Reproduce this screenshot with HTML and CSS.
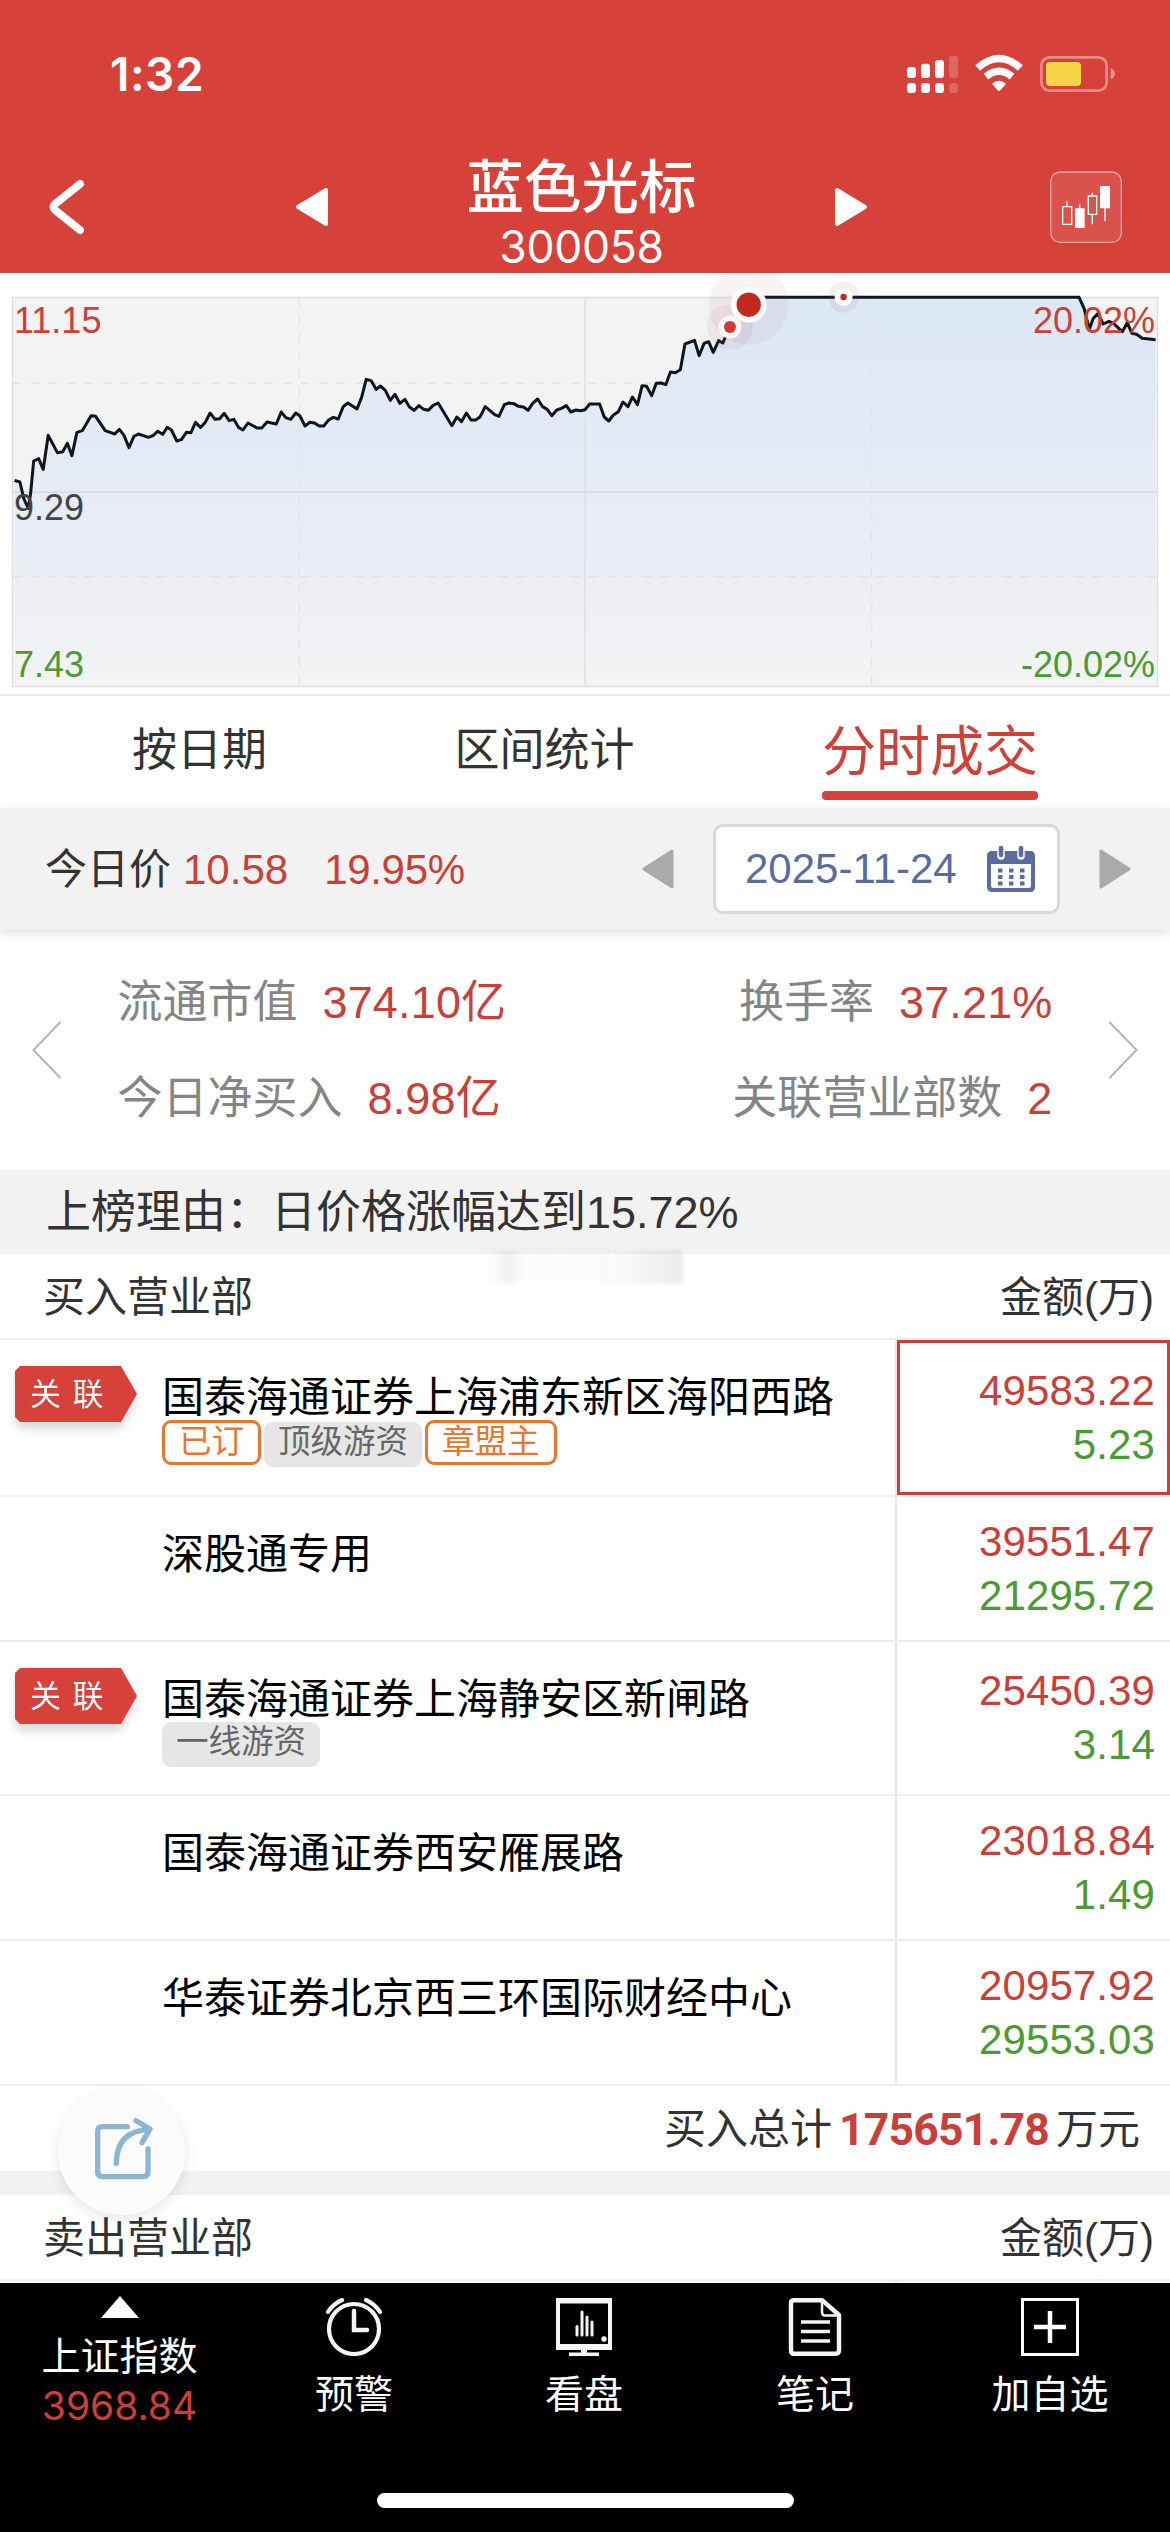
FILE: index.html
```html
<!DOCTYPE html>
<html lang="zh-CN">
<head>
<meta charset="utf-8">
<title>蓝色光标 300058</title>
<link rel="stylesheet" href="styles.css">
</head>
<body>
<header class="header">
  <div class="status">
    <span class="time">1:32</span>
    <svg class="status-icons" viewBox="0 0 720 168">
      <g fill="#fff">
        <rect x="51" y="81" width="27" height="33" rx="9"/><rect x="93" y="71" width="27" height="43" rx="9"/><rect x="135" y="60" width="27" height="54" rx="9"/>
        <rect x="51" y="129" width="27" height="30" rx="10"/><rect x="93" y="129" width="27" height="30" rx="10"/><rect x="135" y="129" width="27" height="30" rx="10"/>
        <rect x="177" y="48" width="27" height="66" rx="9" opacity=".2"/><rect x="177" y="129" width="27" height="30" rx="10" opacity=".2"/>
        <path d="M306 131Q327 113 348 131L331 151Q327 155 323 151Z"/>
      </g>
      <g fill="none" stroke="#fff" stroke-width="22">
        <path d="M263 84Q327 27 391 84"/><path d="M288 110Q327 78 366 110"/>
      </g>
      <rect x="454" y="52" width="196" height="100" rx="25" fill="none" stroke="#fff" stroke-width="8" opacity=".4"/>
      <path d="M662 84Q675 91 675 101T662 118Z" fill="#fff" opacity=".45"/>
      <rect x="468" y="66" width="105" height="72" rx="12" fill="#f7d548"/>
    </svg>
  </div>
  <div class="titlebar">
    <svg class="back" viewBox="0 0 38 56"><path d="M33 5L8 25Q5 28 8 31L33 51" fill="none" stroke="#fff" stroke-width="8" stroke-linecap="round" stroke-linejoin="round"/></svg>
    <div class="switcher">
      <svg width="34" height="40" viewBox="0 0 34 40"><path d="M31 3V37L3 20Z" fill="#fff" stroke="#fff" stroke-width="4" stroke-linejoin="round"/></svg>
      <div class="title"><div class="name">蓝色光标</div><div class="code">300058</div></div>
      <svg width="34" height="40" viewBox="0 0 34 40"><path d="M3 3V37L31 20Z" fill="#fff" stroke="#fff" stroke-width="4" stroke-linejoin="round"/></svg>
    </div>
    <svg class="kline" viewBox="480 392 216 216">
      <rect x="482" y="395" width="212" height="211" rx="28" fill="#fff" fill-opacity=".09" stroke="#fff" stroke-opacity=".5" stroke-width="4"/>
      <g fill="none" stroke="#fff" stroke-width="4">
        <path d="M531 483V497M518 499H545V552H518ZM569 492V506M607 457V466M595 467H620V522H595ZM607 523V552M645 502V543"/>
      </g>
      <path d="M555 504H584V563H555ZM630 437H660V504H630Z" fill="#fff"/>
    </svg>
  </div>
</header>

<section class="chart">
  <svg width="1170" height="421" viewBox="0 0 1170 421">
    <defs>
      <linearGradient id="area" gradientUnits="userSpaceOnUse" x1="0" y1="52" x2="0" y2="1219">
        <stop offset="0" stop-color="#dce8f5"/><stop offset=".5" stop-color="#e6ebf5"/><stop offset="1" stop-color="#f3f3f3"/>
      </linearGradient>
    </defs>
    <rect x="12.5" y="24.5" width="1145" height="389" fill="#f3f3f3"/>
    <g transform="translate(0 7) scale(.38265 .33333)">
      <path fill="url(#area)" d="M38 1219V601L52 606 62 655 74 685 80 640 88 543 101 536 113 568 126 466 150 518 164 515 176 490 188 527 201 457 215 452 238 407 250 409 275 452 300 462 312 448 324 466 337 503 350 469 362 462 388 472 400 467 412 454 425 463 437 442 448 450 462 483 474 479 487 457 499 458 511 427 524 442 536 428 549 399 562 418 574 416 586 400 599 422 611 418 624 443 635 450 648 429 672 444 684 444 698 426 722 432 735 396 747 413 760 418 773 399 784 408 797 438 810 427 822 429 834 438 846 438 858 421 871 412 884 417 897 380 909 369 933 387 945 352 957 298 970 302 983 328 994 318 1007 331 1020 361 1032 343 1045 370 1058 358 1070 381 1082 391 1095 377 1107 388 1119 391 1132 376 1145 369 1181 437 1194 411 1206 425 1219 399 1231 420 1243 420 1255 410 1268 380 1293 404 1304 409 1318 374 1330 369 1343 371 1355 379 1368 381 1380 391 1392 370 1405 357 1418 380 1430 388 1442 407 1455 390 1467 385 1480 377 1492 396 1505 390 1517 392 1529 389 1541 372 1567 372 1579 411 1591 423 1603 405 1616 395 1628 366 1641 380 1653 351 1666 374 1678 317 1690 319 1703 347 1715 310 1728 309 1740 314 1752 276 1765 278 1778 269 1790 192 1815 181 1827 227 1840 190 1852 185 1864 217 1878 182 1889 189 1895 173 1908 141 1957 74 1965 52 2820 52 2833 85 2847 148 2857 115 2870 100 2883 132 2898 124 2910 130 2933 155 2946 128 2958 160 2970 163 2985 175 3020 179V1219Z"/>
    </g>
    <g fill="none" stroke="#dde0e3" stroke-width="1.4">
      <path d="M12.5 24.5H1157.5V413.5H12.5ZM585 24.5V413.5"/><path d="M12.5 219.3H1157.5" stroke="#d5d9e0"/>
      <path d="M12.5 110.3H1157.5M12.5 303.7H1157.5M299.3 24.5V413.5M871.5 24.5V413.5" stroke-dasharray="9 9" stroke="#e1e4e7"/>
    </g>
    <g transform="translate(0 7) scale(.38265 .33333)">
      <path class="line" d="M38 601L52 606 62 655 74 685 80 640 88 543 101 536 113 568 126 466 150 518 164 515 176 490 188 527 201 457 215 452 238 407 250 409 275 452 300 462 312 448 324 466 337 503 350 469 362 462 388 472 400 467 412 454 425 463 437 442 448 450 462 483 474 479 487 457 499 458 511 427 524 442 536 428 549 399 562 418 574 416 586 400 599 422 611 418 624 443 635 450 648 429 672 444 684 444 698 426 722 432 735 396 747 413 760 418 773 399 784 408 797 438 810 427 822 429 834 438 846 438 858 421 871 412 884 417 897 380 909 369 933 387 945 352 957 298 970 302 983 328 994 318 1007 331 1020 361 1032 343 1045 370 1058 358 1070 381 1082 391 1095 377 1107 388 1119 391 1132 376 1145 369 1181 437 1194 411 1206 425 1219 399 1231 420 1243 420 1255 410 1268 380 1293 404 1304 409 1318 374 1330 369 1343 371 1355 379 1368 381 1380 391 1392 370 1405 357 1418 380 1430 388 1442 407 1455 390 1467 385 1480 377 1492 396 1505 390 1517 392 1529 389 1541 372 1567 372 1579 411 1591 423 1603 405 1616 395 1628 366 1641 380 1653 351 1666 374 1678 317 1690 319 1703 347 1715 310 1728 309 1740 314 1752 276 1765 278 1778 269 1790 192 1815 181 1827 227 1840 190 1852 185 1864 217 1878 182 1889 189 1895 173 1908 141 1957 74 1965 52 2820 52 2833 85 2847 148 2857 115 2870 100 2883 132 2898 124 2910 130 2933 155 2946 128 2958 160 2970 163 2985 175 3020 179"/>
    </g>
    <circle cx="730" cy="54" r="23" fill="#a05060" fill-opacity=".08"/>
    <circle cx="730" cy="54" r="11.5" fill="#fff"/><circle cx="730" cy="54" r="6" fill="#cf3a32"/>
    <circle cx="748.7" cy="31.7" r="40" fill="#a05060" fill-opacity=".07"/>
    <circle cx="748.7" cy="31.7" r="18" fill="#fff"/><circle cx="748.7" cy="31.7" r="12.2" fill="#c22a20"/>
    <circle cx="843.6" cy="24" r="15.5" fill="#a05060" fill-opacity=".09"/>
    <circle cx="843.6" cy="24" r="9" fill="#fff"/><circle cx="843.6" cy="24" r="3.2" fill="#c22a20"/>
    <g class="axis">
      <text x="14" y="60" fill="#cc403a">11.15</text>
      <text x="14" y="247" fill="#444">9.29</text>
      <text x="14" y="404" fill="#4b9a33">7.43</text>
      <text x="1155" y="60" text-anchor="end" fill="#cc403a">20.02%</text>
      <text x="1155" y="404" text-anchor="end" fill="#4b9a33">-20.02%</text>
    </g>
  </svg>
</section>

<nav class="tabs"><span>按日期</span><span>区间统计</span><span class="active">分时成交</span></nav>

<section class="price">
  <span class="label">今日价</span><span class="red p1">10.58</span><span class="red p2">19.95%</span>
  <svg class="prev" width="32" height="40" viewBox="0 0 32 40"><path d="M30 2V38L2 20Z" fill="#aaa" stroke="#aaa" stroke-width="3" stroke-linejoin="round"/></svg>
  <div class="date"><span>2025-11-24</span>
    <svg width="48" height="46" viewBox="0 0 48 46">
      <path d="M5 5H43Q48 5 48 10V41Q48 46 43 46H5Q0 46 0 41V10Q0 5 5 5ZM4 18V40Q4 42 6 42H42Q44 42 44 40V18Z" fill="#5b6a9f" fill-rule="evenodd"/>
      <path d="M14 1V10M34 1V10" stroke="#fff" stroke-width="7.500" stroke-linecap="round"/>
      <path d="M14 2V9M34 2V9" stroke="#5b6a9f" stroke-width="4.500" stroke-linecap="round"/>
      <path d="M11 24.500H38M11 31H38M11 37.500H38" stroke="#5b6a9f" stroke-width="4" stroke-dasharray="4.500 6.500"/>
    </svg>
  </div>
  <svg width="32" height="40" viewBox="0 0 32 40"><path d="M2 2V38L30 20Z" fill="#aaa" stroke="#aaa" stroke-width="3" stroke-linejoin="round"/></svg>
</section>

<section class="stats">
  <svg width="30" height="58" viewBox="0 0 30 58"><path d="M28.500 1L1.500 29L28.500 57" fill="none" stroke="#b4b4b4" stroke-width="2"/></svg>
  <div class="grid">
    <div><span>流通市值</span><b>374.10亿</b></div>
    <div class="r"><span>换手率</span><b>37.21%</b></div>
    <div><span>今日净买入</span><b>8.98亿</b></div>
    <div class="r"><span>关联营业部数</span><b>2</b></div>
  </div>
  <svg width="30" height="58" viewBox="0 0 30 58"><path d="M1.500 1L28.500 29L1.500 57" fill="none" stroke="#b4b4b4" stroke-width="2"/></svg>
</section>

<div class="reason">上榜理由：日价格涨幅达到15.72%</div>

<div class="thead">
  <span>买入营业部</span><span>金额(万)</span>
  <i class="smudge"></i>
</div>
<main>
  <div class="row tall">
    <div class="broker"><span class="badge"><em>关 联</em></span><p>国泰海通证券上海浦东新区海阳西路</p>
      <div class="tags"><span class="tag o">已订</span><span class="tag g">顶级游资</span><span class="tag o">章盟主</span></div></div>
    <div class="amount picked"><span class="buy">49583.22</span><span class="sell">5.23</span></div>
  </div>
  <div class="row"><div class="broker"><p>深股通专用</p></div>
    <div class="amount"><span class="buy">39551.47</span><span class="sell">21295.72</span></div></div>
  <div class="row mid">
    <div class="broker"><span class="badge"><em>关 联</em></span><p>国泰海通证券上海静安区新闸路</p>
      <div class="tags solo"><span class="tag g">一线游资</span></div></div>
    <div class="amount"><span class="buy">25450.39</span><span class="sell">3.14</span></div>
  </div>
  <div class="row"><div class="broker"><p>国泰海通证券西安雁展路</p></div>
    <div class="amount"><span class="buy">23018.84</span><span class="sell">1.49</span></div></div>
  <div class="row"><div class="broker"><p>华泰证券北京西三环国际财经中心</p></div>
    <div class="amount"><span class="buy">20957.92</span><span class="sell">29553.03</span></div></div>
</main>
<div class="total"><span>买入总计</span><strong>175651.78</strong><span>万元</span></div>
<div class="band"></div>
<div class="thead sellhead"><span>卖出营业部</span><span>金额(万)</span></div>
<div class="row peek"><div class="broker"></div><div class="amount"></div></div>

<button class="share" aria-label="分享">
  <svg width="60" height="64" viewBox="158 78 180 192"><g fill="none" stroke="#8cb5d3" stroke-width="16" stroke-linecap="round" stroke-linejoin="round">
    <path d="M258 107H183Q169 107 169 121V243Q169 257 183 257H306Q320 257 320 243V174"/>
    <path d="M225 217Q225 120 324 115M284 89L326 114L302 155"/></g></svg>
</button>

<footer class="tabbar">
  <div class="item index"><svg width="38" height="22" viewBox="0 0 38 22"><path d="M19 0L38 22H0Z" fill="#fff"/></svg><span>上证指数</span><span class="val">3968.84</span></div>
  <div class="item"><svg viewBox="0 0 58 58"><g fill="none" stroke="#f4f4f4" stroke-width="4.200" stroke-linecap="round"><circle cx="29" cy="31" r="25"/><path d="M29 13V32H42" stroke-width="4.500"/><path d="M3 14Q8 6 17 2M55 14Q50 6 41 2"/></g></svg><span>预警</span></div>
  <div class="item"><svg viewBox="0 0 58 58"><path d="M1 0H57V52H32V54.500H44V58H14V54.500H26V52H1ZM5 5.500V46H53V5.500Z" fill="#f4f4f4" fill-rule="evenodd"/><g stroke="#f4f4f4" stroke-width="3" stroke-linecap="round"><path d="M22 28.500V37M27 14V37M32 19V37M37 24V37"/></g><circle cx="49" cy="41" r="2.700" fill="#f4f4f4"/></svg><span>看盘</span></div>
  <div class="item"><svg viewBox="0 0 58 58"><g fill="none" stroke="#f4f4f4" stroke-width="4.400" stroke-linejoin="round"><path d="M8 2.200H36L53 17V52Q53 55.800 49 55.800H8Q5 55.800 5 52V5Q5 2.200 8 2.200Z"/><path d="M36 3V14Q36 17.500 39 17.500H52" stroke-width="2.500"/><path d="M15 24H44M15 33.500H44M15 43H44" stroke-width="3.500"/></g></svg><span>笔记</span></div>
  <div class="item"><svg viewBox="0 0 58 58"><path d="M1.500 1.500H56.500V56.500H1.500Z" fill="none" stroke="#fff" stroke-width="3"/><path d="M29 13V45M13 29H45" stroke="#fff" stroke-width="4.500"/></svg><span>加自选</span></div>
  <i class="home"></i>
</footer>
</body>
</html>
```

FILE: styles.css
```css
* { box-sizing: border-box; }
body { margin: 0; width: 1170px; height: 2532px; overflow: hidden; position: relative; background: #fff; color: #333; font: 42px/1.2 "Liberation Sans", "Noto Sans CJK SC", sans-serif; }
svg { display: block; flex: none; }
span { white-space: nowrap; }
.red { color: #c9403a; }

.header { height: 273px; background: #d6413a; color: #fff; }
.status { height: 141px; display: flex; justify-content: space-between; padding: 40px 40px 0 110px; }
.time { font: 600 46px/68px Inter, sans-serif; letter-spacing: .5px; }
.status-icons { width: 240px; height: 56px; }
.titlebar { height: 132px; display: flex; align-items: center; padding: 0 48px 0 47px; }
.back { width: 38px; height: 56px; }
.switcher { width: 574px; margin: 0 182px 0 210px; display: flex; align-items: center; justify-content: space-between; }
.title { text-align: center; margin-top: 11px; }
.name { font-size: 57.500px; font-weight: 500; line-height: 68px; }
.code { font: 400 44.500px/50px Inter, sans-serif; letter-spacing: -.3px; }
.kline { width: 72px; height: 72px; }

.chart { height: 421px; }
.line { fill: none; stroke: #10151c; stroke-width: 3px; stroke-linejoin: round; vector-effect: non-scaling-stroke; }
.axis { font-size: 36px; }

.tabs { height: 114px; display: flex; justify-content: space-between; padding: 0 132px; border-top: 2px solid #ececec; font-size: 45px; line-height: 109px; }
.active { align-self: flex-start; height: 104px; font-size: 54px; line-height: 113px; color: #cf4039; display: flex; flex-direction: column; }
.active::after { content: ""; height: 9px; flex: none; margin-top: -18px; border-radius: 4px; background: #d6413a; }
.price { height: 122px; position: relative; display: flex; align-items: center; padding: 0 39px 0 45px; background: #f2f2f2; box-shadow: 0 3px 9px rgba(0,0,0,.13); }
.price > span { padding-top: 3px; }
.p1 { margin-left: 12px; }
.p2 { margin-left: 36px; letter-spacing: -.3px; }
.prev { margin-left: auto; }
.date { width: 347px; height: 90px; margin: 0 39px; padding: 0 22px 0 29px; display: flex; align-items: center; justify-content: space-between; border: 3px solid #d9d9d9; border-radius: 10px; background: #fff; color: #5b6a9f; }

.stats { height: 240px; display: flex; align-items: center; justify-content: space-between; padding: 0 32px; font-size: 45px; }
.grid { width: 935px; display: grid; grid-template-columns: 1fr 1fr; row-gap: 42px; line-height: 54px; margin-top: 1px; }
.grid div { display: flex; gap: 25px; color: #858585; }
.grid .r { justify-content: flex-end; }
.grid b { font-weight: 400; color: #c9403a; letter-spacing: .15px; }
.reason { height: 84px; line-height: 85px; padding-left: 46px; background: #f2f2f2; font-size: 45px; }

.thead { height: 84px; display: flex; align-items: center; justify-content: space-between; padding: 4px 16px 0 43px; position: relative; }
.sellhead { height: 84px; }
.smudge { position: absolute; left: 485px; top: -4px; width: 198px; height: 34px; background: linear-gradient(90deg, rgba(120,120,120,0) 0, rgba(120,120,120,.1) 12%, rgba(120,120,120,.02) 20%, rgba(120,120,120,.03) 65%, rgba(120,120,120,.14)); filter: blur(2px); }

.row { height: 145px; display: flex; border-top: 2px solid #eee; }
.tall { height: 157px; }
.mid { height: 154px; }
.peek { height: 3px; }
.broker { flex: 1; position: relative; padding: 31px 0 0 162px; border-right: 2px solid #e6e6e6; }
.broker p { margin: 0; height: 50px; line-height: 54px; color: #000; white-space: nowrap; }
.badge { position: absolute; left: 15px; top: 26px; filter: drop-shadow(0 7px 5px rgba(0,0,0,.15)); }
.badge em { display: block; width: 122px; height: 56px; padding-left: 15px; background: #d6413a; clip-path: polygon(0 5px, 5px 0, 106px 0, 122px 28px, 106px 56px, 5px 56px, 0 51px); color: #fff; font-style: normal; font-size: 31px; line-height: 58px; word-spacing: 3px; }
.tags { display: flex; gap: 3px; }
.solo { margin-top: -2px; }
.tag { height: 45px; line-height: 40px; font-size: 32.500px; border-radius: 9px; }
.o { border: 3px solid #e8762f; color: #e8762f; padding: 0 14px; margin-top: -1px; line-height: 39px; }
.g { background: #e6e6e6; color: #666; padding: 0 14px; margin-top: 1px; }
.amount { width: 273px; display: flex; flex-direction: column; align-items: flex-end; justify-content: center; padding-right: 15px; line-height: 54px; }
.amount span { font-size: 42px; letter-spacing: .1px; }
.picked { border: 3px solid #c9403a; padding-right: 12px; }
.buy { color: #c9403a; }
.sell { color: #4b9a33; }

.total { height: 87px; display: flex; align-items: center; justify-content: flex-end; padding: 3px 30px 0 0; border-top: 2px solid #eee; }
.total strong { font: 700 44.500px/54px Roboto, sans-serif; letter-spacing: -.8px; color: #c9403a; margin: 0 7px; }
.band { height: 24px; background: #f2f2f2; }
.share { position: absolute; left: 58px; top: 2088px; width: 127px; height: 127px; border: 0; padding: 0 0 5px 5px; border-radius: 50%; background: #fbfbfb; box-shadow: 0 4px 14px rgba(0,0,0,.1); display: flex; align-items: center; justify-content: center; }

.tabbar { position: absolute; left: 0; right: 0; top: 2283px; height: 249px; background: #000; color: #fff; display: grid; grid-template-columns: 239px 230px 230px 232px 238px; font-size: 39px; }
.item { display: flex; flex-direction: column; align-items: center; padding-top: 15px; line-height: 54px; }
.item svg { width: 58px; height: 58px; margin-bottom: 12px; }
.index { padding-top: 13px; }
.index svg { width: 38px; height: 22px; }
.index span { line-height: 54px; }
.index .val { font: 400 39px/44px Inter, sans-serif; color: #c9403a; }
.home { position: absolute; left: 377px; top: 210px; width: 417px; height: 15px; border-radius: 8px; background: #fff; }
```
